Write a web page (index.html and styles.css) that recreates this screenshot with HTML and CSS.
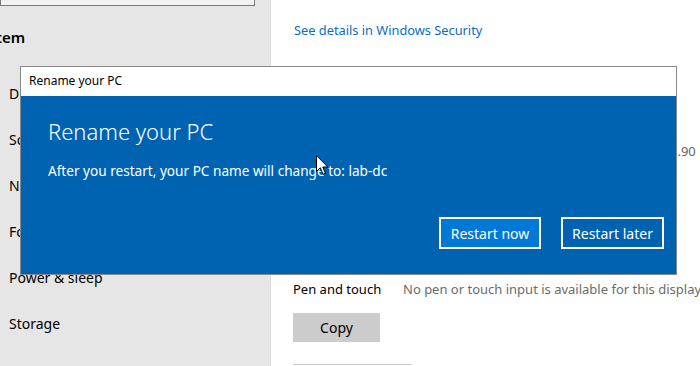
FILE: index.html
```html
<!DOCTYPE html>
<html>
<head>
<meta charset="utf-8">
<link rel="stylesheet" href="styles.css">
</head>
<body>
<div class="page">
  <aside class="sidebar">
    <div class="search"></div>
    <div class="heading"><span class="clip">System</span></div>
    <ul class="nav">
      <li>Display</li>
      <li>Sound</li>
      <li>Notifications &amp; actions</li>
      <li>Focus assist</li>
      <li>Power &amp; sleep</li>
      <li>Storage</li>
      <li>Tablet mode</li>
    </ul>
  </aside>
  <main class="main">
    <a class="link">See details in Windows Security</a>
    <div class="row partial"><span class="value">2.90</span></div>
    <div class="row pen"><span class="label">Pen and touch</span><span class="value">No pen or touch input is available for this display</span></div>
    <button class="copy">Copy</button>
    <div class="next-btn"></div>
  </main>
</div>

<div class="dialog">
  <div class="titlebar">Rename your PC</div>
  <div class="body">
    <h1 class="title">Rename your PC</h1>
    <p class="msg">After you restart, your PC name will change to: lab-dc</p>
    <div class="actions">
      <button class="btn primary">Restart now</button>
      <button class="btn">Restart later</button>
    </div>
  </div>
</div>

<svg class="cursor" width="13" height="21" viewBox="0 0 13 21">
  <path d="M0.5 0.5 L0.5 16.5 L4.3 12.8 L7 19.3 L9.4 18.3 L6.8 12 L11.8 12 Z" fill="#fff" stroke="#000" stroke-width="1" stroke-linejoin="miter"/>
</svg>
</body>
</html>
```

FILE: styles.css
```css
* { box-sizing: border-box; }
html, body { margin: 0; padding: 0; }
body {
  width: 700px;
  height: 366px;
  overflow: hidden;
  position: relative;
  font-family: "Noto Sans", "Open Sans", sans-serif;
  background: #fff;
}
.page {
  display: flex;
  height: 366px;
}
.sidebar {
  width: 271px;
  flex: none;
  background: #e6e6e6;
  border-right: 1px solid #dcdcdc;
  overflow: hidden;
}
.search {
  width: 255px;
  height: 30px;
  margin-top: -24px;
  background: #f2f2f2;
  border: 1px solid #7a7a7a;
}
.heading {
  margin-top: 19px;
  height: 24px;
  font-size: 15px;
  font-weight: 600;
  line-height: 24px;
  color: #000;
  overflow: hidden;
  white-space: nowrap;
}
.clip { display: inline-block; margin-left: -28px; }
.nav {
  list-style: none;
  margin: 0;
  padding: 0;
  margin-top: 33px;
}
.nav li {
  height: 46px;
  line-height: 24px;
  padding-left: 9px;
  font-size: 14px;
  color: #000;
  white-space: nowrap;
}
.nav li:last-child { padding-top: 2px; }
.main {
  flex: 1;
  padding-left: 22px;
  display: flex;
  flex-direction: column;
  align-items: flex-start;
}
.link {
  margin-top: 20px;
  font-size: 12.8px;
  line-height: 20px;
  color: #0a6cc4;
  padding-left: 1px;
}
.row {
  display: flex;
  font-size: 13px;
  line-height: 20px;
  white-space: nowrap;
}
.partial {
  margin-top: 101px;
  padding-left: 377px;
}
.partial .value { color: #666; }
.pen { margin-top: 118px; }
.label { width: 110px; color: #000; }
.value { color: #6b6b6b; }
.copy {
  display: block;
  margin-top: 14px;
  width: 87px;
  height: 29px;
  line-height: 29px;
  border: none;
  background: #cccccc;
  font-family: inherit;
  font-size: 14px;
  color: #000;
  padding: 0;
}
.next-btn {
  margin-top: 22px;
  width: 119px;
  height: 10px;
  border-top: 1px solid #c8c8c8;
}
.dialog {
  position: absolute;
  left: 20px;
  top: 66px;
  width: 657px;
  height: 209px;
  border: 1px solid #8a8a8a;
  background: #0063b1;
  display: flex;
  flex-direction: column;
}
.titlebar {
  height: 29px;
  background: #fff;
  padding-left: 8px;
  font-size: 12px;
  line-height: 28px;
  color: #000;
  flex: none;
}
.body {
  flex: 1;
  padding: 20px 12px 0 27px;
  color: #fff;
  display: flex;
  flex-direction: column;
}
.title {
  margin: 0;
  font-size: 22px;
  font-weight: 300;
  line-height: 30px;
}
.msg {
  margin: 15px 0 0 0;
  font-size: 13.6px;
  line-height: 20px;
}
.actions {
  margin-top: 36px;
  display: flex;
  justify-content: flex-end;
  gap: 20px;
}
.btn {
  width: 103px;
  height: 32px;
  border: 2px solid #fff;
  background: #0063b1;
  color: #fff;
  font-family: inherit;
  font-size: 14px;
  padding: 0;
}
.btn.primary { background: #0078d7; width: 102px; }
.cursor {
  position: absolute;
  left: 316px;
  top: 155px;
}
```
